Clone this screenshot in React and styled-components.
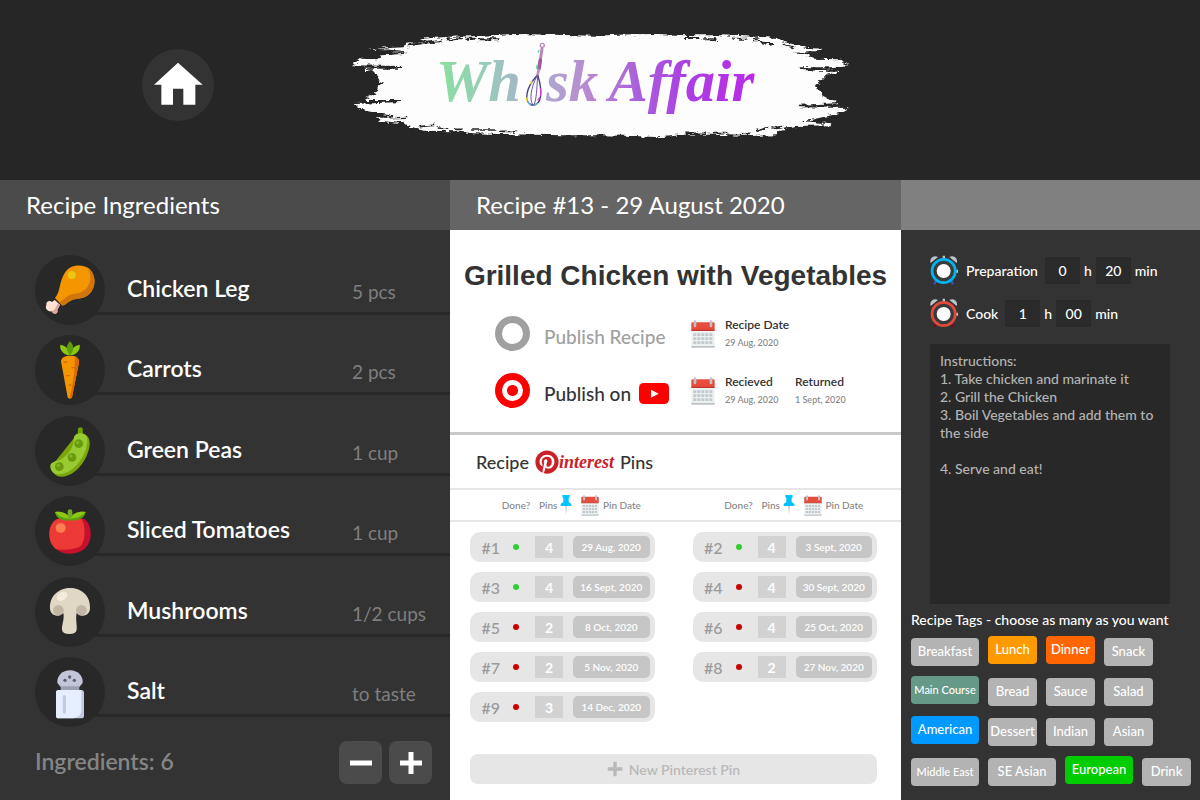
import React, { useState } from "react";
import styled, { createGlobalStyle, css } from "styled-components";
import { FaPinterest } from "react-icons/fa";

const GlobalStyle = createGlobalStyle`
  *, *::before, *::after { box-sizing: border-box; }
  body {
    margin: 0;
    background: #333333;
    font-family: Lato, "Liberation Sans", sans-serif;
    font-size: 14px;
    font-weight: 500;
    color: #ffffff;
  }
  button, input, textarea { font-family: inherit; font-weight: inherit; color: inherit; }
  button { cursor: pointer; }
`;

/* ---------- page frame ---------- */

const Page = styled.div`
  min-height: 100vh;
  display: flex;
  flex-direction: column;
`;

const Header = styled.header`
  display: grid;
  grid-template-columns: 1fr auto 1fr;
  align-items: center;
  height: 180px;
  padding: 20px 0 30px;
  background: #262626;
`;

const HomeSlot = styled.nav`
  display: flex;
  justify-content: center;
  padding-left: 15px;
`;

const HomeLink = styled.a`
  display: block;
  width: 72px;
  height: 72px;
  border-radius: 50%;
  background: #333333;
  svg { display: block; }
`;

const Columns = styled.main`
  flex: 1;
  display: grid;
  grid-template-columns: 450fr 451fr 299fr;
`;

const Panel = styled.section`
  display: flex;
  flex-direction: column;
  min-width: 0;
  background: ${(p) => (p.$light ? "#ffffff" : "#333333")};
  color: ${(p) => (p.$light ? "#333333" : "#ffffff")};
`;

const PanelBar = styled.h2`
  display: flex;
  align-items: center;
  height: 50px;
  margin: 0;
  padding: 0 26px 2px;
  background: ${(p) => p.$tone};
  color: #ffffff;
  font-size: 24px;
  font-weight: 400;
`;

/* ---------- ingredients ---------- */

const IngredientList = styled.ul`
  flex: 1;
  display: flex;
  flex-direction: column;
  justify-content: space-between;
  margin: 0;
  padding: 25px 0 0 35px;
  list-style: none;
`;

const IngredientRow = styled.li`
  display: flex;
  height: 70px;
`;

const FoodIcon = styled.svg`
  flex: none;
  width: 70px;
  height: 70px;
  border-radius: 50%;
  background: #282828;
`;

const IngredientLine = styled.div`
  flex: 1;
  display: grid;
  grid-template-columns: 1fr 98px;
  align-items: end;
  height: 60px;
  margin-left: -10px;
  padding: 0 0 8px 32px;
  border-bottom: 3px solid #282828;
`;

const IngredientName = styled.span`
  font-size: 23px;
  line-height: 32px;
  font-weight: 600;
`;

const Quantity = styled.span`
  font-size: 19px;
  line-height: 24px;
  font-weight: 400;
  color: #7f7f7f;
`;

const IngredientFooter = styled.footer`
  display: flex;
  align-items: center;
  gap: 7px;
  padding: 14px 18px 16px 35px;
`;

const Total = styled.span`
  flex: 1;
  padding-bottom: 4px;
  font-size: 23px;
  font-weight: 600;
  color: #858585;
`;

const SquareButton = styled.button`
  display: grid;
  place-items: center;
  width: 43px;
  height: 43px;
  padding: 0;
  border: 0;
  border-radius: 8px;
  background: #4b4b4b;
`;

/* ---------- recipe ---------- */

const RecipeTitle = styled.h1`
  margin: 28px 0 22px;
  text-align: center;
  font: 700 28px/36px "Liberation Sans", sans-serif;
  white-space: nowrap;
`;

const PublishGrid = styled.div`
  display: grid;
  grid-template-columns: 196px 1fr;
  align-items: center;
  row-gap: 22px;
  padding: 0 20px 24px 45px;
  border-bottom: 3px solid #c9c9c9;
`;

const PublishOption = styled.label`
  display: flex;
  align-items: center;
  gap: 14px;
  font-size: 19px;
  color: ${(p) => (p.$on ? "#333333" : "#a0a0a0")};
  white-space: nowrap;
`;

const RoundCheck = styled.input`
  appearance: none;
  flex: none;
  width: 35px;
  height: 35px;
  margin: 0;
  border: 7px solid ${(p) => (p.checked ? "#ff0000" : "#a0a0a0")};
  border-radius: 50%;
  background: ${(p) =>
    p.checked ? "radial-gradient(circle, #ff0000 5px, #ffffff 6px)" : "#ffffff"};
`;

const PublishText = styled.span`
  display: flex;
  align-items: center;
  gap: 8px;
  padding-top: 6px;
`;

const DateGroup = styled.div`
  display: flex;
  align-items: center;
  gap: 10px;
`;

const DateBlock = styled.div`
  display: flex;
  flex-direction: column;
  gap: 4px;
  min-width: 60px;
  font-size: 12px;
  line-height: 15px;
  font-weight: 600;
  white-space: nowrap;
  small {
    font-size: 9px;
    line-height: 14px;
    font-weight: 500;
    color: #858585;
  }
`;

/* ---------- pins ---------- */

const PinsHeading = styled.h2`
  display: flex;
  align-items: center;
  height: 55px;
  margin: 0;
  padding: 0 26px;
  border-bottom: 2px solid #e6e6e6;
  font-size: 18px;
  font-weight: 500;
`;

const PinterestMark = styled.span`
  display: flex;
  align-items: center;
  margin: 0 6px;
  color: #cb2027;
  font: italic 700 18px/24px "Liberation Serif", serif;
`;

const PinTable = styled.table`
  width: 100%;
  margin-top: -10px;
  table-layout: fixed;
  border-collapse: separate;
  border-spacing: 0 10px;
`;

const Th = styled.th`
  height: 32px;
  padding: 0 0 0 ${(p) => p.$indent || 0}px;
  border-bottom: 2px solid #e6e6e6;
  font-size: 10px;
  font-weight: 500;
  color: #858585;
  text-align: left;
  white-space: nowrap;
`;

const ThContent = styled.span`
  display: flex;
  align-items: center;
  justify-content: ${(p) => (p.$center ? "center" : "flex-start")};
  gap: ${(p) => p.$gap || 3}px;
  svg { flex: none; }
`;

const Td = styled.td`
  height: 30px;
  padding: 0;
  font-size: 16px;
  ${(p) =>
    p.$fill &&
    css`
      background: #e6e6e6;
    `}
  ${(p) =>
    p.$fill === "start" &&
    css`
      border-radius: 10px 0 0 10px;
      color: #9a9a9a;
      text-align: right;
    `}
  ${(p) =>
    p.$fill === "end" &&
    css`
      border-radius: 0 10px 10px 0;
      padding: 0 5px;
    `}
  ${(p) =>
    p.$fill === "done" &&
    css`
      text-align: center;
      line-height: 0;
    `}
`;

const DoneDot = styled.input`
  appearance: none;
  width: 6px;
  height: 6px;
  margin: 0;
  border-radius: 50%;
  background: #cc0000;
  &:checked { background: #32cd32; }
`;

const PinCount = styled.input`
  display: block;
  width: 28px;
  height: 22px;
  margin-left: 3px;
  padding: 0;
  border: 0;
  background: #d2d2d2;
  color: #ffffff;
  font-size: 14px;
  font-weight: 700;
  text-align: center;
`;

const PinDate = styled.button`
  display: block;
  width: 100%;
  height: 22px;
  padding: 0;
  border: 0;
  border-radius: 5px;
  background: #c6c6c6;
  color: #ffffff;
  font-size: 10px;
  font-weight: 600;
`;

const NewPinButton = styled.button`
  display: flex;
  align-items: center;
  justify-content: center;
  gap: 6px;
  height: 30px;
  margin: auto 24px 16px 20px;
  border: 0;
  border-radius: 8px;
  background: #e6e6e6;
  color: #b9b9b9;
  font-size: 14px;
  font-weight: 600;
`;

/* ---------- details ---------- */

const Details = styled.div`
  flex: 1;
  display: flex;
  flex-direction: column;
  padding: 26px 8px 14px 10px;
`;

const TimeRow = styled.div`
  display: flex;
  align-items: center;
  gap: 4px;
  height: 28px;
  margin: 0 0 15px 19px;
`;

const TimeLabel = styled.span`
  margin: 0 3px 0 4px;
  font-size: 14px;
`;

const TimeInput = styled.input`
  width: 35px;
  height: 27px;
  padding: 0;
  border: 0;
  background: #2a2a2a;
  font-size: 14px;
  text-align: center;
`;

const Instructions = styled.textarea`
  flex: 1;
  min-height: 260px;
  margin: 2px 22px 0 19px;
  padding: 8px 0 8px 10px;
  border: 0;
  resize: none;
  background: #282828;
  color: #b4b4b4;
  font-size: 14px;
  line-height: 18px;
`;

const TagsHeading = styled.h3`
  margin: 6px 0 8px;
  font-size: 14px;
  line-height: 20px;
  font-weight: 500;
`;

const TagList = styled.div`
  display: flex;
  flex-wrap: wrap;
  gap: 12px 9px;
`;

const Tag = styled.button`
  width: ${(p) => (p.$wide ? 68 : 49)}px;
  height: 28px;
  padding: 0 0 2px;
  border: 0;
  border-radius: 4px;
  background: ${(p) => (p["aria-pressed"] ? p.$color : "#b3b3b3")};
  transform: ${(p) => (p["aria-pressed"] ? "translateY(-2px)" : "none")};
  color: #ffffff;
  font-size: ${(p) => (p.$small ? 11 : 13)}px;
  white-space: nowrap;
`;

/* ---------- drawings ---------- */

const Logo = () => (
  <svg width="520" height="130" viewBox="0 0 1560 390" role="img" aria-label="Whisk Affair">
    <defs>
      <linearGradient id="ink" gradientUnits="userSpaceOnUse" x1="280" y1="0" x2="1230" y2="0">
        <stop offset="0" stopColor="#88e29a" />
        <stop offset="0.17" stopColor="#99cbbb" />
        <stop offset="0.38" stopColor="#b0a3cf" />
        <stop offset="0.5" stopColor="#b886d2" />
        <stop offset="0.65" stopColor="#a95fdc" />
        <stop offset="0.8" stopColor="#ac3fe2" />
        <stop offset="1" stopColor="#b92be8" />
      </linearGradient>
      <filter id="rough" x="0" y="0" width="1" height="1">
        <feTurbulence type="fractalNoise" baseFrequency="0.04 0.12" numOctaves="3" seed="4" />
        <feDisplacementMap in="SourceGraphic" scale="18" xChannelSelector="R" yChannelSelector="G" />
      </filter>
    </defs>
    <g filter="url(#rough)">
      <path
        fill="#fdfdfd"
        d="M36 136 L60 116 L110 118 L120 106 L200 100 L150 92 L84 88 L190 82 L190 72 L255 66 L240 56 L330 50
           L420 48 L520 42 L640 44 L760 47 L880 43 L950 42 L1040 46 L1140 46 L1250 50 L1310 54 L1330 66
           L1385 78 L1400 84 L1448 86 L1430 96 L1358 98 L1400 106 L1420 116 L1500 118 L1512 130 L1528 136
           L1470 142 L1376 142 L1378 150 L1440 152 L1492 152 L1488 160 L1460 164 L1448 178 L1424 198
           L1440 210 L1446 226 L1468 238 L1492 238 L1490 250 L1376 254 L1376 262 L1526 264 L1506 276
           L1480 284 L1440 294 L1400 302 L1470 310 L1474 316 L1366 318 L1320 330 L1310 346 L1230 348
           L1120 344 L1040 344 L960 352 L885 348 L780 346 L680 346 L580 344 L480 342 L400 340 L345 334
           L250 332 L215 320 L190 310 L120 302 L108 292 L160 288 L84 274 L60 266 L44 252 L186 246
           L186 240 L80 240 L76 234 L100 224 L114 212 L118 196 L134 192 L118 186 L110 164 L96 150
           L70 156 L76 146 L186 146 L186 138 Z"
      />
      <g stroke="#262626" fill="none" strokeLinecap="round">
        <path strokeWidth="6" d="M322 58h44M378 56h26M416 58h60M1036 54h40M1090 58h38M1180 56h40M1238 58h18M206 76l40-6M252 68l50-4M1330 74l30 8M1262 66l34 8" />
        <path strokeWidth="5" d="M345 328h20M398 330h66M482 334h48M1036 340h60M1124 338h36M1210 340h18M240 320l40-4M292 324l32 2M1250 332l34-10M1296 324l30-4" />
        <path strokeWidth="4" d="M110 88l80 6M120 104l70-4M120 294l80-2M1400 96l40 0M1390 302l60 4" />
        <path strokeWidth="3" strokeDasharray="3 9" d="M70 160c24-16 40 6 42 26M82 232c22-6 34-20 34-34M1490 162c-30-10-42 16-64 34M1490 236c-30 4-40-14-52-34" />
      </g>
    </g>
    <text fill="url(#ink)" fontFamily='"Liberation Serif", serif' fontStyle="italic" fontWeight="700" fontSize="176">
      <tspan x="288" y="242">Wh</tspan>
      <tspan x="618" y="242">sk</tspan>
      <tspan x="806" y="242">Affair</tspan>
    </text>
    <g fill="none" strokeLinecap="round">
      <circle cx="607" cy="76" r="6" stroke="#b58ab8" strokeWidth="4" />
      <path stroke="#b58ab8" strokeWidth="9" d="M606 86L601 120" />
      <path stroke="#9a5c9c" strokeWidth="11" d="M601 120L597 146" />
      <path stroke="#b98fc0" strokeWidth="8" d="M596 150L592 168" />
      <path stroke="#3f3c86" strokeWidth="4" d="M590 168C560 200 548 246 576 255C606 258 608 214 594 168" />
      <path stroke="#6f56b0" strokeWidth="3" d="M590 170C572 204 568 240 578 254M593 170C590 204 590 240 582 254" />
      <path stroke="#e8dc3c" strokeWidth="5" d="M572 190l3-6M559 234l2 8" />
      <path stroke="#d63ccc" strokeWidth="4" d="M602 206l0 20M594 240l4-6" />
      <path stroke="#54d88c" strokeWidth="4" d="M597 92l-2 4M591 136l-1 8M586 254l6-3" />
      <path stroke="#68b4e0" strokeWidth="4" d="M564 246l8 9" />
    </g>
  </svg>
);

const HomeIcon = () => (
  <svg width="72" height="72" viewBox="0 0 216 216" aria-hidden="true">
    <path fill="#fff" d="M108 41L182 107H160V167H124V119H93V167H58V107H36Z" />
  </svg>
);

const CalendarIcon = ({ width = 24 }) => (
  <svg width={width} height={Math.round((width * 28) / 24)} viewBox="0 0 72 84" aria-hidden="true">
    <path fill="#ecf0f1" d="M1 30H71V79Q71 82 68 82H4Q1 82 1 79Z" />
    <path fill="#bdc3c7" d="M1 78H71V80Q71 83 68 83H4Q1 83 1 80Z" />
    <path fill="#e74c3c" d="M5 7H67Q71 7 71 11V30H1V11Q1 7 5 7Z" />
    <path fill="#c0392b" d="M1 29H71V33H1Z" />
    <path stroke="#bdc3c7" strokeWidth="8" strokeLinecap="round" d="M12 5V18M60 5V18" />
    <path stroke="#c3c9cc" strokeWidth="8" strokeDasharray="9 3" d="M7 44H65M7 56H65M7 68H65" />
  </svg>
);

const PinIcon = () => (
  <svg width="12" height="20" viewBox="0 0 36 60" aria-hidden="true">
    <path fill="#b4b4b4" d="M16 32H20L18 60Z" />
    <path fill="#00c3ff" d="M7 0H29V6L26 9V21L34 27V33H2V27L10 21V9L7 6Z" />
  </svg>
);

const YoutubeIcon = () => (
  <svg width="30" height="21" viewBox="0 0 90 63" role="img" aria-label="YouTube">
    <rect width="90" height="63" rx="14" fill="#ff0000" />
    <path fill="#fff" d="M36 20L59 32L36 44Z" />
  </svg>
);

const ClockIcon = ({ ring, feet }) => (
  <svg width="28" height="30" viewBox="0 0 84 90" aria-hidden="true">
    <path stroke={feet} strokeWidth="7" d="M18 76L13 88M64 76L69 88" />
    <path fill="#bdc3c7" d="M2 24A15 15 0 0 1 24 6ZM58 6A15 15 0 0 1 80 24ZM38 2h7v10h-7ZM76 44h8v9h-8Z" />
    <circle cx="41" cy="48" r="35" fill="#3a3a3a" stroke={ring} strokeWidth="8" />
    <circle cx="41" cy="48" r="21" fill="#fff" />
  </svg>
);

const PlusIcon = ({ size = 24, weight = 5, color = "#ffffff", minus = false }) => (
  <svg width={size} height={size} viewBox="0 0 24 24" stroke={color} strokeWidth={weight} aria-hidden="true">
    <path d={minus ? "M1 12H23" : "M1 12H23M12 1V23"} />
  </svg>
);

const drawings = {
  chicken: (
    <FoodIcon viewBox="105 225 210 210" aria-hidden="true">
      <path fill="#ffe1d2" d="M164 360L180 374L172 390C176 402 160 406 155 394C142 396 134 384 139 376C137 364 149 360 156 366Z" />
      <path fill="#dba79c" d="M180 374L172 390C176 402 160 406 155 394L164 388L174 370Z" />
      <path fill="#f49600" d="M165 354C182 336 176 306 196 276C214 250 252 252 270 268C290 290 286 326 268 342C248 360 226 354 212 362C200 368 194 378 186 376Z" />
      <path fill="#cf750c" d="M262 262C292 284 288 324 268 342C248 360 226 354 212 362C200 368 194 378 186 376L178 368C192 360 200 346 218 342C264 342 284 300 262 262Z" />
      <circle cx="215" cy="285" r="12" fill="#efc312" />
    </FoodIcon>
  ),
  carrot: (
    <FoodIcon viewBox="105 465 210 210" aria-hidden="true">
      <path fill="#f49600" d="M183 544C184 532 196 527 210 527C226 527 236 532 237 546L216 652Q210 660 203 652Z" />
      <path fill="#dc6a00" d="M224 528C234 532 238 538 237 550L216 652Q213 657 208 656C220 610 226 570 224 528Z" />
      <path stroke="#dc6a00" strokeWidth="4" strokeLinecap="round" d="M192 546h8M216 563h8M200 587h8M207 615h6" />
      <path fill="#8cc814" d="M210 526C188 524 178 508 181 494C196 496 208 508 210 526ZM210 526C232 524 242 508 239 494C224 496 212 508 210 526Z" />
      <path fill="#5e9c08" d="M210 484C224 498 222 512 210 526C198 512 196 498 210 484Z" />
    </FoodIcon>
  ),
  peas: (
    <FoodIcon viewBox="105 42 210 210" aria-hidden="true">
      <path stroke="#6f9f00" strokeWidth="15" strokeLinecap="round" d="M241 83V96" />
      <path fill="#7aa60a" d="M230 98C250 88 272 100 269 128C264 174 226 222 186 224C170 226 154 212 152 196Z" />
      <path fill="#98cb32" d="M222 104C230 88 262 90 262 114C262 160 222 212 184 216C162 220 150 206 151 190C154 176 172 180 186 170C208 154 222 136 222 104Z" />
      <g fill="#679a0c">
        <circle cx="236" cy="125" r="13" />
        <circle cx="216" cy="166" r="13" />
        <circle cx="178" cy="194" r="13" />
      </g>
      <g fill="#82b51f">
        <circle cx="233" cy="122" r="5" />
        <circle cx="213" cy="162" r="5" />
        <circle cx="175" cy="190" r="5" />
      </g>
    </FoodIcon>
  ),
  tomato: (
    <FoodIcon viewBox="105 284 210 210" aria-hidden="true">
      <path fill="#c8102e" d="M170 354C190 348 236 348 254 354C276 370 280 420 254 442C226 464 186 460 166 442Z" />
      <path fill="#ee3a36" d="M170 354C190 348 226 348 244 354C258 368 256 420 242 434C220 448 182 446 166 442C142 424 140 370 170 354Z" />
      <circle cx="182" cy="380" r="15" fill="#ff8052" />
      <path fill="#5ba010" d="M165 332C184 328 200 336 210 346C220 336 238 328 257 332C254 352 232 360 210 357C188 360 168 352 165 332Z" />
      <path fill="#8cc814" d="M165 332C184 328 202 336 210 352C196 352 178 348 165 332ZM257 332C238 328 218 336 210 352C224 352 242 348 257 332Z" />
      <path stroke="#74a82a" strokeWidth="14" strokeLinecap="round" d="M210 331V342" />
    </FoodIcon>
  ),
  mushroom: (
    <FoodIcon viewBox="105 528 210 210" aria-hidden="true">
      <path fill="#e0d7c4" d="M150 622C148 582 180 561 210 561C242 561 272 582 270 622C270 642 248 652 230 636C226 656 232 674 230 686Q228 699 208 699Q188 699 186 686C184 674 194 656 190 636C172 652 150 642 150 622Z" />
      <circle cx="175" cy="628" r="16" fill="#c2b6a4" />
      <circle cx="244" cy="628" r="16" fill="#c2b6a4" />
      <ellipse cx="186" cy="586" rx="17" ry="12" fill="#f3ecdd" transform="rotate(-35 186 586)" />
    </FoodIcon>
  ),
  salt: (
    <FoodIcon viewBox="105 110 210 210" aria-hidden="true">
      <path fill="#c3c6d8" d="M172 188C170 166 188 150 210 150C232 150 250 166 248 188L238 200H182Z" />
      <path fill="#9ba0b4" d="M182 198H238V210H182Z" />
      <rect x="168" y="209" width="84" height="85" rx="8" fill="#c3cbe0" />
      <path fill="#e6eeff" d="M176 209H244V270Q244 290 220 294H176Q168 294 168 286V217Q168 209 176 209Z" />
      <rect x="188" y="224" width="10" height="56" rx="5" fill="#c3cbe0" />
      <g fill="#5c6072">
        <circle cx="195" cy="180" r="5" />
        <circle cx="209" cy="170" r="5" />
        <circle cx="223" cy="180" r="5" />
      </g>
    </FoodIcon>
  ),
};

/* ---------- data ---------- */

const ingredients = [
  { icon: "chicken", name: "Chicken Leg", qty: "5 pcs" },
  { icon: "carrot", name: "Carrots", qty: "2 pcs" },
  { icon: "peas", name: "Green Peas", qty: "1 cup" },
  { icon: "tomato", name: "Sliced Tomatoes", qty: "1 cup" },
  { icon: "mushroom", name: "Mushrooms", qty: "1/2 cups" },
  { icon: "salt", name: "Salt", qty: "to taste" },
];

const pins = [
  { id: 1, done: true, count: 4, date: "29 Aug, 2020" },
  { id: 2, done: true, count: 4, date: "3 Sept, 2020" },
  { id: 3, done: true, count: 4, date: "16 Sept, 2020" },
  { id: 4, done: false, count: 4, date: "30 Sept, 2020" },
  { id: 5, done: false, count: 2, date: "8 Oct, 2020" },
  { id: 6, done: false, count: 4, date: "25 Oct, 2020" },
  { id: 7, done: false, count: 2, date: "5 Nov, 2020" },
  { id: 8, done: false, count: 2, date: "27 Nov, 2020" },
  { id: 9, done: false, count: 3, date: "14 Dec, 2020" },
];

const tags = [
  { name: "Breakfast", wide: true },
  { name: "Lunch", color: "#ff9900", on: true },
  { name: "Dinner", color: "#ff6600", on: true },
  { name: "Snack" },
  { name: "Main Course", wide: true, small: true, color: "#669988", on: true },
  { name: "Bread" },
  { name: "Sauce" },
  { name: "Salad" },
  { name: "American", wide: true, color: "#0099ff", on: true },
  { name: "Dessert" },
  { name: "Indian" },
  { name: "Asian" },
  { name: "Middle East", wide: true, small: true },
  { name: "SE Asian", wide: true },
  { name: "European", wide: true, color: "#00cc00", on: true },
  { name: "Drink" },
];

const instructions = `Instructions:
1. Take chicken and marinate it
2. Grill the Chicken
3. Boil Vegetables and add them to the side

4. Serve and eat!`;

/* ---------- parts ---------- */

function PinCells({ pin }) {
  if (!pin) return <Td colSpan={4} />;
  return (
    <>
      <Td $fill="start">#{pin.id}</Td>
      <Td $fill="done">
        <DoneDot type="checkbox" defaultChecked={pin.done} aria-label={`Pin ${pin.id} done`} />
      </Td>
      <Td $fill="count">
        <PinCount defaultValue={pin.count} aria-label={`Pins for ${pin.id}`} />
      </Td>
      <Td $fill="end">
        <PinDate type="button">{pin.date}</PinDate>
      </Td>
    </>
  );
}

function PinHeaders() {
  return (
    <>
      <Th />
      <Th>
        <ThContent $center>Done?</ThContent>
      </Th>
      <Th $indent={7}>
        <ThContent>
          Pins <PinIcon />
        </ThContent>
      </Th>
      <Th $indent={13}>
        <ThContent $gap={4}>
          <CalendarIcon width={18} /> Pin Date
        </ThContent>
      </Th>
    </>
  );
}

function PinColumns() {
  return (
    <>
      <col style={{ width: 30 }} />
      <col style={{ width: 32 }} />
      <col style={{ width: 36 }} />
      <col />
    </>
  );
}

function PinGrid() {
  const rows = [];
  for (let i = 0; i < pins.length; i += 2) rows.push([pins[i], pins[i + 1]]);
  return (
    <PinTable>
      <colgroup>
        <col style={{ width: 20 }} />
        <PinColumns />
        <col style={{ width: 38 }} />
        <PinColumns />
        <col style={{ width: 24 }} />
      </colgroup>
      <thead>
        <tr>
          <Th />
          <PinHeaders />
          <Th />
          <PinHeaders />
          <Th />
        </tr>
      </thead>
      <tbody>
        {rows.map(([left, right]) => (
          <tr key={left.id}>
            <Td />
            <PinCells pin={left} />
            <Td />
            <PinCells pin={right} />
            <Td />
          </tr>
        ))}
      </tbody>
    </PinTable>
  );
}

function CookingTime({ label, icon, hours, minutes }) {
  return (
    <TimeRow role="group" aria-label={label}>
      {icon}
      <TimeLabel>{label}</TimeLabel>
      <TimeInput defaultValue={hours} aria-label={`${label} hours`} />
      <span>h</span>
      <TimeInput defaultValue={minutes} aria-label={`${label} minutes`} />
      <span>min</span>
    </TimeRow>
  );
}

export default function App() {
  const [published, setPublished] = useState({ site: false, youtube: true });
  const [selected, setSelected] = useState(() => tags.filter((t) => t.on).map((t) => t.name));

  const toggleTag = (name) =>
    setSelected((list) => (list.includes(name) ? list.filter((n) => n !== name) : [...list, name]));

  return (
    <Page>
      <GlobalStyle />
      <Header>
        <HomeSlot>
          <HomeLink href="#home" aria-label="Home">
            <HomeIcon />
          </HomeLink>
        </HomeSlot>
        <Logo />
      </Header>

      <Columns>
        <Panel>
          <PanelBar $tone="#4b4b4b">Recipe Ingredients</PanelBar>
          <IngredientList>
            {ingredients.map((item) => (
              <IngredientRow key={item.name}>
                {drawings[item.icon]}
                <IngredientLine>
                  <IngredientName>{item.name}</IngredientName>
                  <Quantity>{item.qty}</Quantity>
                </IngredientLine>
              </IngredientRow>
            ))}
          </IngredientList>
          <IngredientFooter>
            <Total>Ingredients: {ingredients.length}</Total>
            <SquareButton type="button" aria-label="Remove ingredient">
              <PlusIcon minus />
            </SquareButton>
            <SquareButton type="button" aria-label="Add ingredient">
              <PlusIcon />
            </SquareButton>
          </IngredientFooter>
        </Panel>

        <Panel $light>
          <PanelBar $tone="#656565">Recipe #13 - 29 August 2020</PanelBar>
          <RecipeTitle>Grilled Chicken with Vegetables</RecipeTitle>
          <PublishGrid>
            <PublishOption $on={published.site}>
              <RoundCheck
                type="checkbox"
                checked={published.site}
                onChange={(e) => setPublished({ ...published, site: e.target.checked })}
              />
              <PublishText>Publish Recipe</PublishText>
            </PublishOption>
            <DateGroup>
              <CalendarIcon />
              <DateBlock>
                Recipe Date<small>29 Aug, 2020</small>
              </DateBlock>
            </DateGroup>
            <PublishOption $on={published.youtube}>
              <RoundCheck
                type="checkbox"
                checked={published.youtube}
                onChange={(e) => setPublished({ ...published, youtube: e.target.checked })}
              />
              <PublishText>
                Publish on <YoutubeIcon />
              </PublishText>
            </PublishOption>
            <DateGroup>
              <CalendarIcon />
              <DateBlock>
                Recieved<small>29 Aug, 2020</small>
              </DateBlock>
              <DateBlock>
                Returned<small>1 Sept, 2020</small>
              </DateBlock>
            </DateGroup>
          </PublishGrid>
          <PinsHeading>
            Recipe
            <PinterestMark>
              <FaPinterest size={24} aria-label="P" />
              interest
            </PinterestMark>
            Pins
          </PinsHeading>
          <PinGrid />
          <NewPinButton type="button">
            <PlusIcon size={16} weight={5} color="#b9b9b9" />
            New Pinterest Pin
          </NewPinButton>
        </Panel>

        <Panel>
          <PanelBar $tone="#808080" aria-hidden="true" />
          <Details>
            <CookingTime
              label="Preparation"
              icon={<ClockIcon ring="#00b4f0" feet="#4a4ab4" />}
              hours="0"
              minutes="20"
            />
            <CookingTime
              label="Cook"
              icon={<ClockIcon ring="#e04a3c" feet="#6e0f0f" />}
              hours="1"
              minutes="00"
            />
            <Instructions aria-label="Instructions" defaultValue={instructions} />
            <TagsHeading>Recipe Tags - choose as many as you want</TagsHeading>
            <TagList>
              {tags.map((tag) => (
                <Tag
                  key={tag.name}
                  type="button"
                  aria-pressed={selected.includes(tag.name)}
                  $color={tag.color || "#0099ff"}
                  $wide={tag.wide}
                  $small={tag.small}
                  onClick={() => toggleTag(tag.name)}
                >
                  {tag.name}
                </Tag>
              ))}
            </TagList>
          </Details>
        </Panel>
      </Columns>
    </Page>
  );
}
